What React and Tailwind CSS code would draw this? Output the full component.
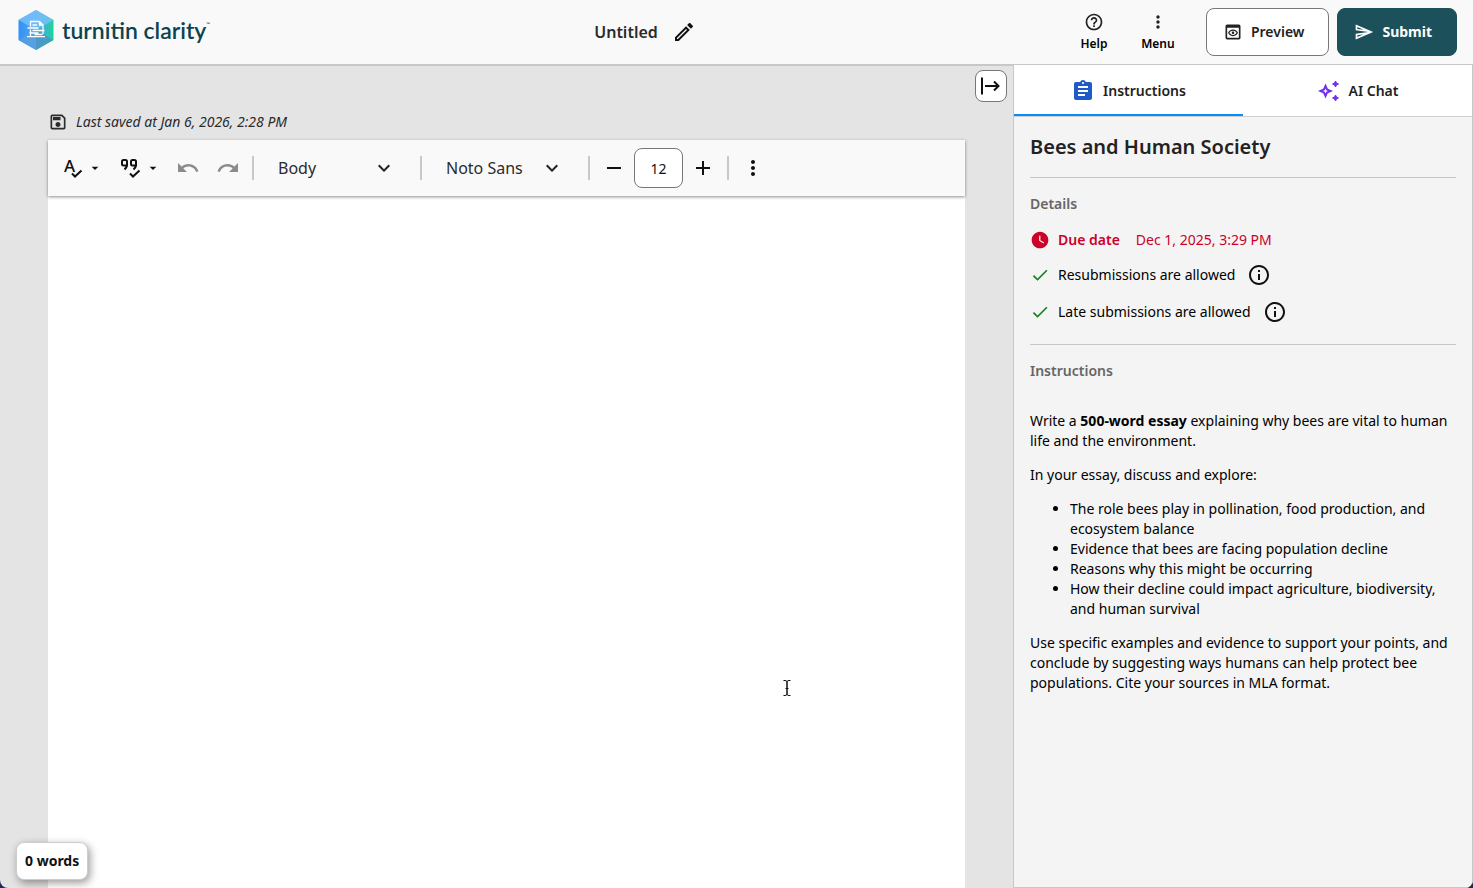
import { useState } from 'react';
import {
  MdAdd,
  MdArrowDropDown,
  MdAssignment,
  MdCheck,
  MdExpandMore,
  MdHelpOutline,
  MdInfoOutline,
  MdMoreVert,
  MdOutlineEdit,
  MdOutlinePreview,
  MdOutlineSave,
  MdOutlineSend,
  MdRedo,
  MdRemove,
  MdUndo,
  MdWatchLater,
} from 'react-icons/md';

const Logo = () => (
  <a href="#" className="flex items-center gap-2 pb-1 text-[#0a4450]" aria-label="turnitin clarity">
    <svg viewBox="0 0 36 40" className="w-9 h-10" aria-hidden="true">
      <defs>
        <linearGradient id="hexLeft" x1="0" x2="1">
          <stop offset="0" stopColor="#2f92f5" />
          <stop offset="1" stopColor="#55a9f6" />
        </linearGradient>
        <linearGradient id="hexRight" x1="0" x2="1">
          <stop offset="0" stopColor="#4fa8e8" />
          <stop offset="0.55" stopColor="#38b8cc" />
          <stop offset="1" stopColor="#1fd59a" />
        </linearGradient>
      </defs>
      <path d="M18 0 0.5 10v20L18 40z" fill="url(#hexLeft)" />
      <path d="M18 0l17.500 10v20L18 40z" fill="url(#hexRight)" />
      <path d="M18 0l17.500 10L18 20 0.500 10z" fill="#7cc3fb" opacity="0.75" />
      <path d="M18 20l17.500 10L18 40z" fill="#4b93bd" opacity="0.75" />
      <path d="M18 20L0.500 30 18 40z" fill="#5a9fdc" opacity="0.8" />
      <g fill="none" stroke="#fff" strokeWidth="1.300" strokeLinecap="round" strokeLinejoin="round">
        <path d="M12.500 16v-4.500h9l3.500 3.500v8.500M21.500 11.500V15H25M12.500 20v6" />
        <path d="M15 15h3.500M10 18h10M15 20.500h11M12 23h8M17 24.500h7" />
        <path d="M9.500 26.700h17" />
      </g>
    </svg>
    <span className="flex items-start font-['Lato',sans-serif] text-[23px] leading-8 font-semibold">
      turnitin clarity
      <span className="text-[5px] leading-5">™</span>
    </span>
  </a>
);

const SpellcheckIcon = () => (
  <svg viewBox="0 0 24 24" className="w-6 h-6 overflow-visible" aria-hidden="true">
    <text x="4" y="16" fontFamily="Noto Sans" fontSize="17" fontWeight="500" fill="currentColor">A</text>
    <path d="M12 17.500l3 3 6.500-6" fill="none" stroke="currentColor" strokeWidth="2" />
  </svg>
);

const QuoteCheckIcon = () => (
  <svg viewBox="0 0 24 24" className="w-6 h-6" fill="none" stroke="currentColor" strokeWidth="2" aria-hidden="true">
    <path d="M9 8v1.500H5.500Q4 9.500 4 8V5.500Q4 4 5.500 4h2Q9 4 9 5.500V9q0 2-2.500 4.500" />
    <path d="M18 8v1.500h-3.500Q13 9.500 13 8V5.500Q13 4 14.500 4h2Q18 4 18 5.500V9q0 2-2.500 4.500" />
    <path d="M12 17.500l3 3 6.500-6" />
  </svg>
);

const SparklesIcon = () => (
  <svg viewBox="0 0 24 24" className="w-6 h-6 text-[#7432e8]" fill="currentColor" aria-hidden="true">
    <path
      d="M8.500 7l1.500 3.500L13.500 12 10 13.500 8.500 17 7 13.500 3.500 12 7 10.500z"
      fill="none"
      stroke="currentColor"
      strokeWidth="2"
    />
    <path d="M18.500 2l1 2 2 1-2 1-1 2-1-2-2-1 2-1z" stroke="currentColor" />
    <path d="M18.500 16l1 2 2 1-2 1-1 2-1-2-2-1 2-1z" stroke="currentColor" />
  </svg>
);

const Header = () => (
  <header className="flex h-16 shrink-0 items-center justify-between bg-[#f9f9f9] pl-[18px] pr-4">
    <Logo />
    <div className="flex items-center gap-3 pl-4">
      <h1 className="text-base font-semibold text-[#2b2b2b]">Untitled</h1>
      <button type="button" aria-label="Edit title" className="p-0.5 text-[#111]">
        <MdOutlineEdit className="w-6 h-6" />
      </button>
    </div>
    <div className="flex items-center gap-2">
      <div className="flex gap-2 pr-3 text-xs font-semibold text-black">
        <button type="button" className="flex w-14 flex-col items-center gap-1">
          <MdHelpOutline className="w-5 h-5 text-[#222]" />
          Help
        </button>
        <button type="button" className="flex w-14 flex-col items-center gap-1">
          <MdMoreVert className="w-5 h-5 text-[#222]" />
          Menu
        </button>
      </div>
      <button
        type="button"
        className="flex h-12 items-center gap-2 rounded-lg border border-[#777] bg-white pl-4 pr-6 text-sm font-semibold text-[#222]"
      >
        <MdOutlinePreview className="w-5 h-5" />
        Preview
      </button>
      <button
        type="button"
        className="flex h-12 items-center gap-2 rounded-lg border border-[#1c505b] bg-[#1c505b] pl-4 pr-6 text-sm font-bold text-white"
      >
        <MdOutlineSend className="w-5 h-5" />
        Submit
      </button>
    </div>
  </header>
);

const Divider = () => <span className="h-6 w-0.5 shrink-0 bg-[#c8c8c8]" />;

const ToolbarSelect = ({ label, options }) => (
  <div className="relative w-[166px]">
    <select
      aria-label={label}
      className="h-10 w-full appearance-none bg-transparent pl-6 text-base text-[#2b2b2b] outline-none"
    >
      {options.map(option => (
        <option key={option}>{option}</option>
      ))}
    </select>
    <MdExpandMore className="pointer-events-none absolute right-6 top-2 w-6 h-6 text-[#222]" />
  </div>
);

const Toolbar = () => {
  const [size, setSize] = useState(12);

  return (
    <div className="relative flex h-14 items-center bg-[#f9f9f9] pl-1 text-[#111] shadow-[0_1px_3px_rgba(0,0,0,0.45)]">
      <button type="button" aria-label="Spelling" className="flex h-10 w-[58px] items-center gap-[3px] pl-2">
        <SpellcheckIcon />
        <MdArrowDropDown className="w-4 h-4" />
      </button>
      <button type="button" aria-label="Citations" className="flex h-10 w-[58px] items-center gap-[3px] pl-2">
        <QuoteCheckIcon />
        <MdArrowDropDown className="w-4 h-4" />
      </button>
      <button type="button" aria-label="Undo" className="flex h-10 w-10 items-center justify-center text-[#8c8c8c]">
        <MdUndo className="w-6 h-6" />
      </button>
      <button type="button" aria-label="Redo" className="mr-1 flex h-10 w-10 items-center justify-center text-[#8c8c8c]">
        <MdRedo className="w-6 h-6" />
      </button>
      <Divider />
      <ToolbarSelect label="Text style" options={['Body', 'Heading 1', 'Heading 2']} />
      <Divider />
      <ToolbarSelect label="Font" options={['Noto Sans', 'Arial', 'Roboto']} />
      <Divider />
      <button
        type="button"
        aria-label="Decrease font size"
        onClick={() => setSize(s => Math.max(1, s - 1))}
        className="ml-1 flex h-10 w-10 items-center justify-center"
      >
        <MdRemove className="w-6 h-6" />
      </button>
      <input
        type="text"
        aria-label="Font size"
        value={size}
        onChange={(e) => setSize(Number(e.target.value) || 1)}
        className="h-10 w-[49px] rounded-lg border border-[#777] bg-white text-center text-sm text-[#111]"
      />
      <button
        type="button"
        aria-label="Increase font size"
        onClick={() => setSize(s => s + 1)}
        className="mr-1 flex h-10 w-10 items-center justify-center"
      >
        <MdAdd className="w-6 h-6" />
      </button>
      <Divider />
      <button type="button" aria-label="More" className="ml-1 flex h-10 w-10 items-center justify-center">
        <MdMoreVert className="w-6 h-6" />
      </button>
    </div>
  );
};

const Editor = () => (
  <main className="relative flex min-w-0 flex-1 flex-col border-t-2 border-[#c8c8c8] bg-[#e4e4e4] px-12">
    <button
      type="button"
      aria-label="Collapse panel"
      className="absolute right-1.5 top-1 flex h-8 w-8 items-center justify-center rounded-lg border border-[#777] bg-white text-[#111]"
    >
      <svg viewBox="0 0 24 24" className="w-6 h-6" fill="none" stroke="currentColor" strokeWidth="2" aria-hidden="true">
        <path d="M3 3.500v17M6 12h13.500M15 7.500l4.500 4.500-4.500 4.500" />
      </svg>
    </button>
    <p className="mt-[46px] mb-2 flex items-center gap-2 text-sm italic text-[#2b2b2b]">
      <MdOutlineSave className="w-5 h-5" />
      Last saved at Jan 6, 2026, 2:28 PM
    </p>
    <div className="relative flex flex-1 flex-col bg-white">
      <Toolbar />
      <textarea aria-label="Document" className="w-full flex-1 resize-none bg-white px-24 py-16 text-base outline-none" />
      {/* Text cursor */}
      <svg viewBox="0 0 10 18" className="absolute left-[80%] top-[72%] w-2.5 h-[18px]" fill="none" stroke="#111" aria-hidden="true">
        <path d="M1.500 1.500h1.500q2 0 2 1.500v12q0 1.500-2 1.500H1.500M8.500 1.500H7q-2 0-2 1.500v12q0 1.500 2 1.500h1.500M3.500 9.500h3" />
      </svg>
    </div>
    <div className="absolute bottom-2 left-4 rounded-lg border border-[#ccc] bg-white px-2 py-2 text-sm font-bold text-[#111] shadow-[2px_3px_8px_rgba(0,0,0,0.4)]">
      0 words
    </div>
  </main>
);

const AllowedRow = ({ children }) => (
  <li className="flex items-center gap-2">
    <MdCheck className="w-5 h-5 text-[#12801c]" />
    {children}
    <button type="button" aria-label={`About: ${children}`} className="ml-1 text-[#111]">
      <MdInfoOutline className="w-6 h-6" />
    </button>
  </li>
);

const topics = [
  'The role bees play in pollination, food production, and ecosystem balance',
  'Evidence that bees are facing population decline',
  'Reasons why this might be occurring',
  'How their decline could impact agriculture, biodiversity, and human survival',
];

const SidePanel = () => (
  <aside className="flex w-[460px] shrink-0 flex-col border border-[#c8c8c8] bg-[#f4f4f4] text-sm text-black">
    <div className="flex shrink-0 border-b border-[#d0d0d0] bg-white font-semibold text-[#222]">
      <button type="button" className="flex h-[51px] flex-1 items-center justify-center gap-2 border-b-2 border-[#0a8cf5] pt-0.5">
        <MdAssignment className="w-6 h-6 text-[#205ac8]" />
        Instructions
      </button>
      <button type="button" className="flex h-[51px] flex-1 items-center justify-center gap-2 border-b-2 border-transparent pt-0.5">
        <SparklesIcon />
        AI Chat
      </button>
    </div>
    <div className="flex-1 px-4 leading-5">
      <h2 className="border-b border-[#c8c8c8] py-4 text-xl leading-7 font-semibold text-[#222]">
        Bees and Human Society
      </h2>
      <h3 className="mt-4 font-semibold text-[#666]">Details</h3>
      <div className="mt-4 flex items-center gap-2 text-[#cc0028]">
        <MdWatchLater className="w-5 h-5" />
        <span className="font-semibold">Due date</span>
        <span className="ml-2">Dec 1, 2025, 3:29 PM</span>
      </div>
      <ul className="mt-[13px] flex flex-col gap-[13px] border-b border-[#c8c8c8] pb-5">
        <AllowedRow>Resubmissions are allowed</AllowedRow>
        <AllowedRow>Late submissions are allowed</AllowedRow>
      </ul>
      <h3 className="mt-4 font-semibold text-[#666]">Instructions</h3>
      <div className="mt-[30px] flex flex-col gap-3.5">
        <p>
          Write a <strong>500-word essay</strong> explaining why bees are vital to human life and the environment.
        </p>
        <p>In your essay, discuss and explore:</p>
        <ul className="list-disc pl-10">
          {topics.map(topic => (
            <li key={topic}>{topic}</li>
          ))}
        </ul>
        <p>
          Use specific examples and evidence to support your points, and conclude by suggesting ways humans can help
          protect bee populations. Cite your sources in MLA format.
        </p>
      </div>
    </div>
  </aside>
);

const App = () => (
  <div className="min-h-screen bg-[#1b2b52] font-['Noto_Sans',sans-serif]">
    <div className="flex min-h-screen flex-col overflow-hidden rounded-b-lg">
      <Header />
      <div className="flex flex-1">
        <Editor />
        <SidePanel />
      </div>
    </div>
  </div>
);

export default App;
